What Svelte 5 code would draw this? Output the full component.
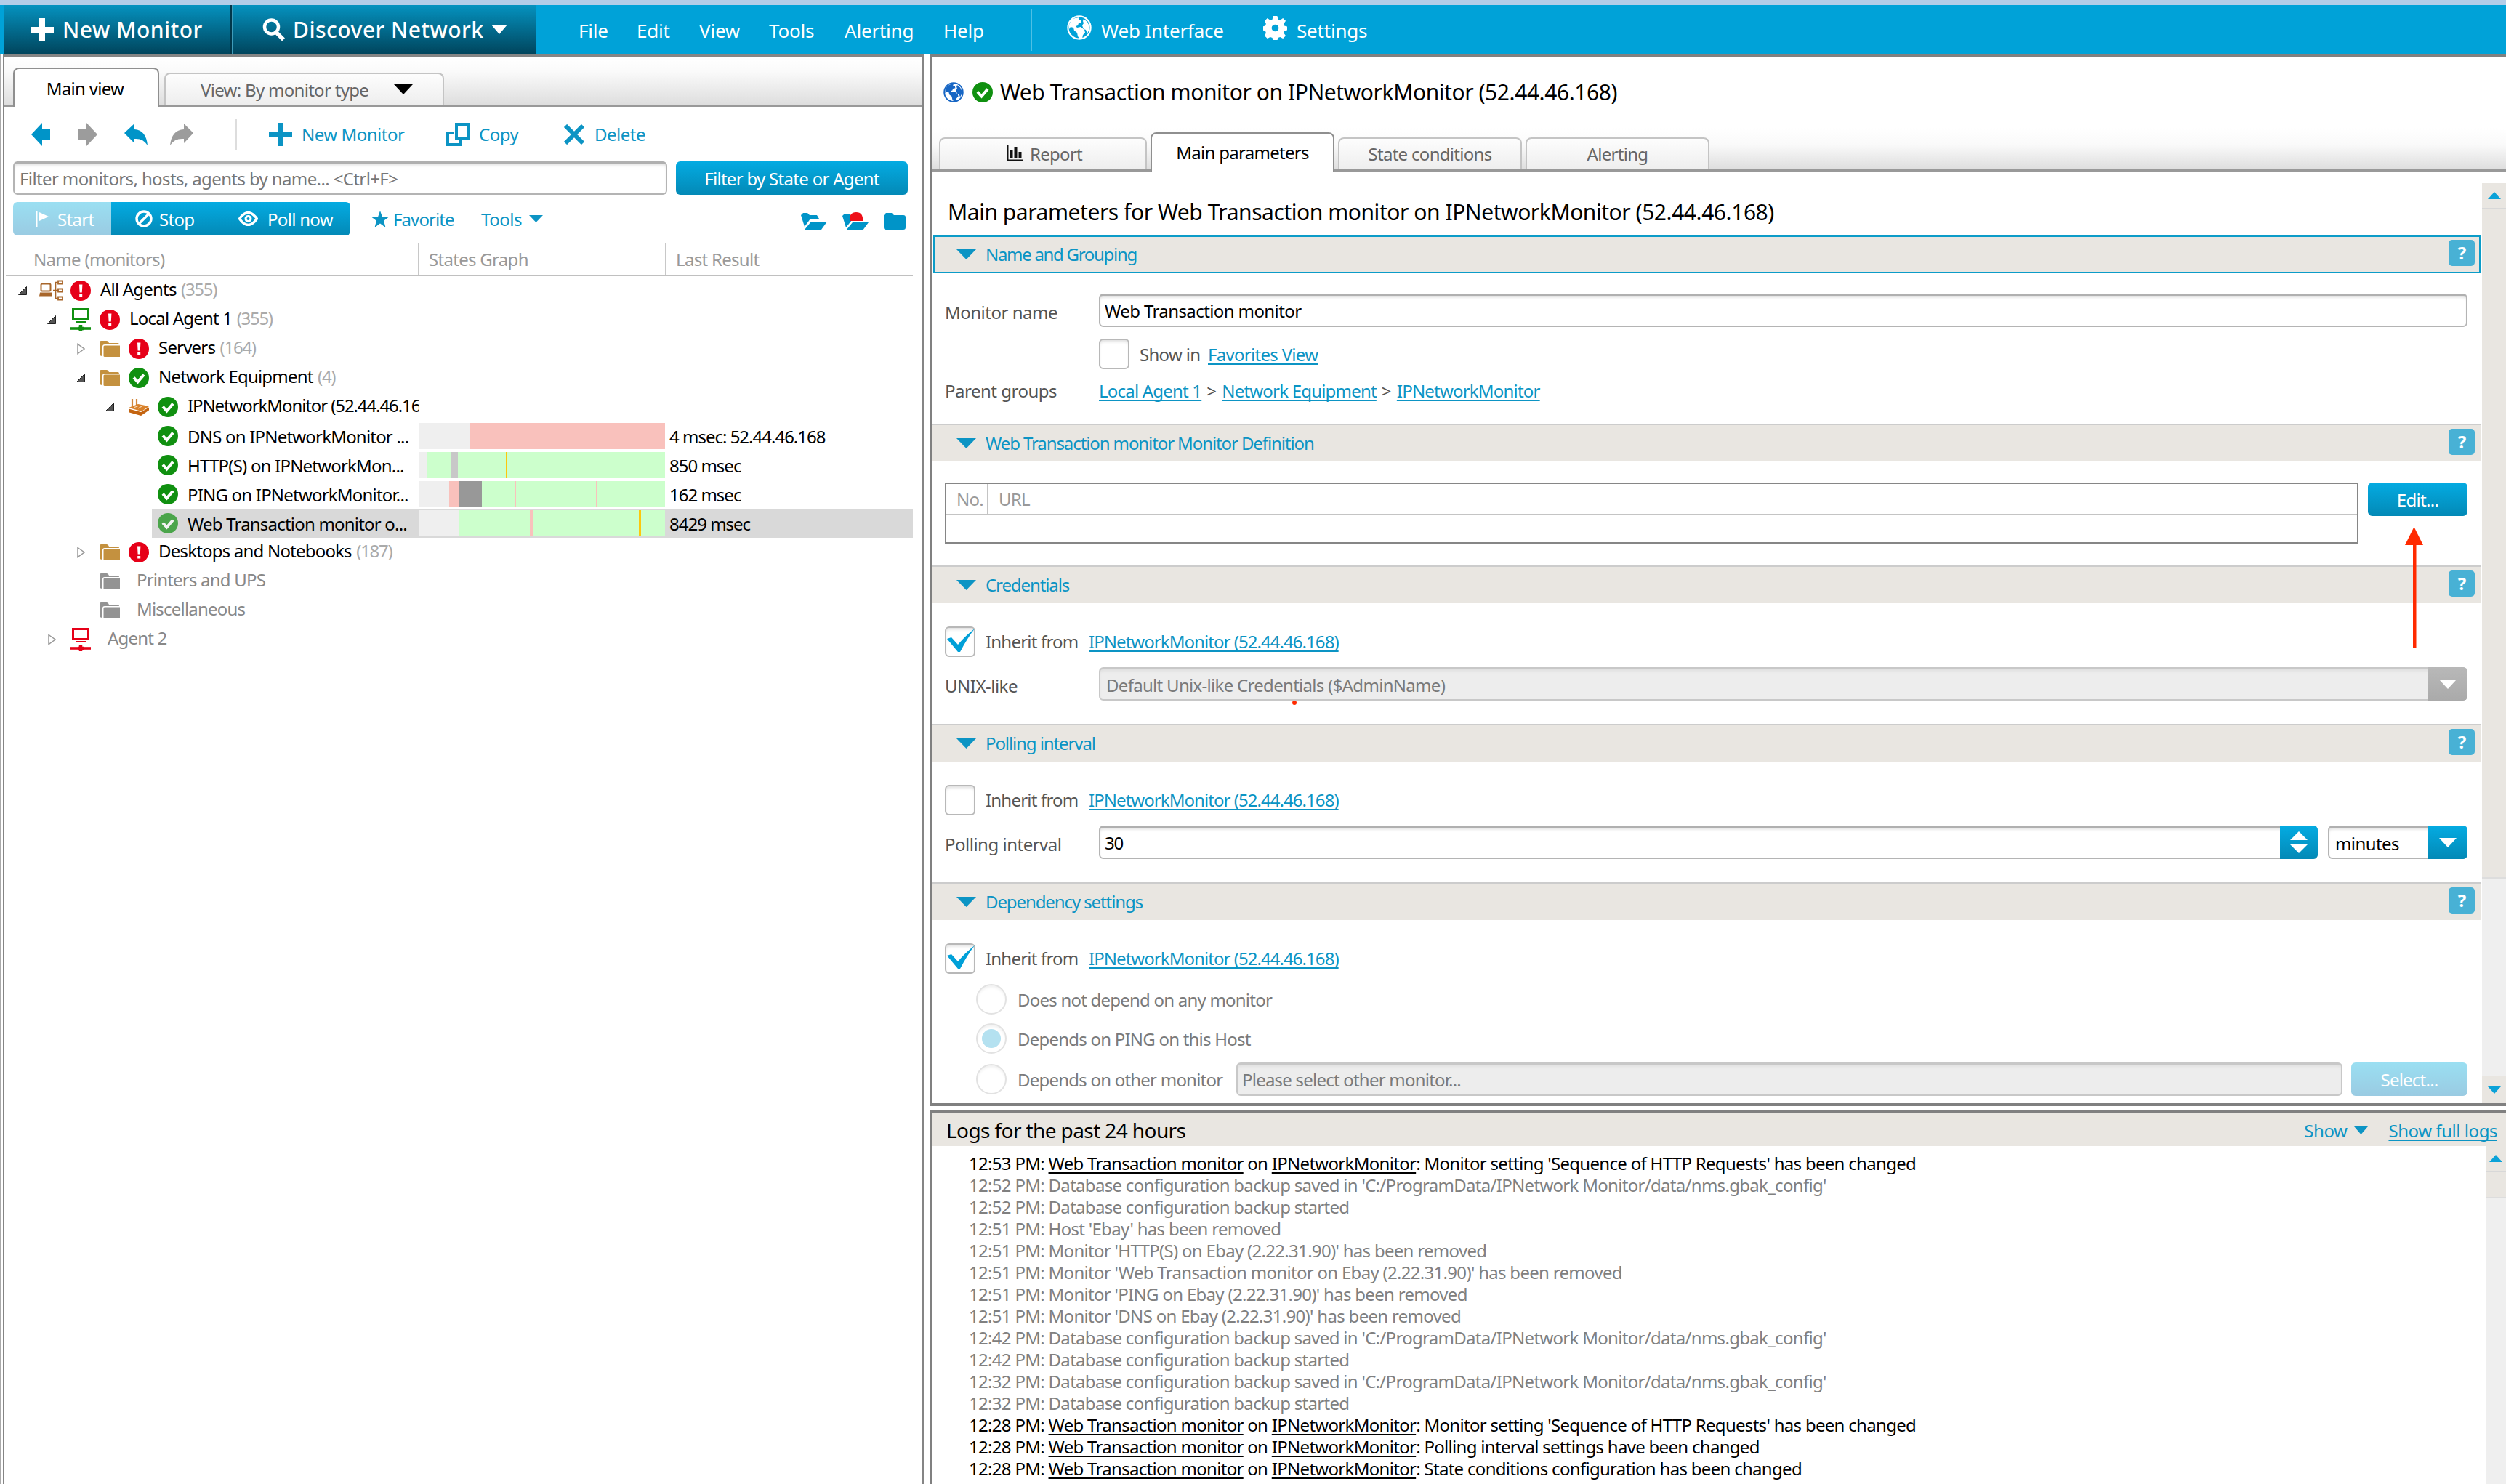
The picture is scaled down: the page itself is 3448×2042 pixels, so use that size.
<script>
	let filter = '';
	let monitorName = 'Web Transaction monitor';
	let interval = '30';

	const menu = [
		{ name: 'File', width: 80 },
		{ name: 'Edit', width: 86 },
		{ name: 'View', width: 96 },
		{ name: 'Tools', width: 104 },
		{ name: 'Alerting', width: 136 },
		{ name: 'Help', width: 120 }
	];

	// depth = indent level, arrow = open | closed, bars = [color, from, to] in px of the graph column
	const tree = [
		{ depth: 0, arrow: 'open', icon: 'agents', status: 'bad', name: 'All Agents', count: 355 },
		{ depth: 1, arrow: 'open', icon: 'agent', status: 'bad', name: 'Local Agent 1', count: 355 },
		{ depth: 2, arrow: 'closed', icon: 'folder', status: 'bad', name: 'Servers', count: 164 },
		{ depth: 2, arrow: 'open', icon: 'folder', status: 'ok', name: 'Network Equipment', count: 4 },
		{ depth: 3, arrow: 'open', icon: 'router', status: 'ok', name: 'IPNetworkMonitor (52.44.46.168)' },
		{
			depth: 3,
			status: 'ok',
			name: 'DNS on IPNetworkMonitor ...',
			result: '4 msec: 52.44.46.168',
			bars: [['pink', 69, 338]]
		},
		{
			depth: 3,
			status: 'ok',
			name: 'HTTP(S) on IPNetworkMon...',
			result: '850 msec',
			bars: [
				['green', 11, 338],
				['grey', 43, 53],
				['yellow', 119, 121]
			]
		},
		{
			depth: 3,
			status: 'ok',
			name: 'PING on IPNetworkMonitor...',
			result: '162 msec',
			bars: [
				['pink', 41, 55],
				['green', 55, 338],
				['dark', 55, 86],
				['pink', 131, 133],
				['pink', 243, 245]
			]
		},
		{
			depth: 3,
			status: 'ok',
			name: 'Web Transaction monitor o...',
			result: '8429 msec',
			selected: true,
			bars: [
				['green', 54, 338],
				['pink', 152, 157],
				['yellow', 302, 305]
			]
		},
		{ depth: 2, arrow: 'closed', icon: 'folder', status: 'bad', name: 'Desktops and Notebooks', count: 187 },
		{ depth: 2, icon: 'folder-off', name: 'Printers and UPS', off: true },
		{ depth: 2, icon: 'folder-off', name: 'Miscellaneous', off: true },
		{ depth: 1, arrow: 'closed', icon: 'agent-off', name: 'Agent 2', off: true }
	];

	const backup = "Database configuration backup saved in 'C:/ProgramData/IPNetwork Monitor/data/nms.gbak_config'";
	const started = 'Database configuration backup started';

	const logs = [
		{ time: '12:53 PM', monitor: true, text: "Monitor setting 'Sequence of HTTP Requests' has been changed" },
		{ time: '12:52 PM', text: backup },
		{ time: '12:52 PM', text: started },
		{ time: '12:51 PM', text: "Host 'Ebay' has been removed" },
		{ time: '12:51 PM', text: "Monitor 'HTTP(S) on Ebay (2.22.31.90)' has been removed" },
		{ time: '12:51 PM', text: "Monitor 'Web Transaction monitor on Ebay (2.22.31.90)' has been removed" },
		{ time: '12:51 PM', text: "Monitor 'PING on Ebay (2.22.31.90)' has been removed" },
		{ time: '12:51 PM', text: "Monitor 'DNS on Ebay (2.22.31.90)' has been removed" },
		{ time: '12:42 PM', text: backup },
		{ time: '12:42 PM', text: started },
		{ time: '12:32 PM', text: backup },
		{ time: '12:32 PM', text: started },
		{ time: '12:28 PM', monitor: true, text: "Monitor setting 'Sequence of HTTP Requests' has been changed" },
		{ time: '12:28 PM', monitor: true, text: 'Polling interval settings have been changed' },
		{ time: '12:28 PM', monitor: true, text: 'State conditions configuration has been changed' }
	];
</script>

{#snippet plus()}
	<svg class="i32" viewBox="0 0 32 32"><path d="M12 0h8v12h12v8H20v12h-8V20H0v-8h12z" fill="currentColor" /></svg>
{/snippet}

{#snippet globe()}
	<svg class="globe" viewBox="0 0 34 34">
		<circle cx="17" cy="17" r="15.6" fill="none" stroke="currentColor" stroke-width="2.2" />
		<path
			d="M3 13l3-6 5-3 6-1-1 3 3 0 1 4-4 1-1 3-3 1 2 2 5-1 5 4 1 4-3 3-1 5-3 1-3-4-1-5-4-3-1-4-4-1-2 3z"
			fill="currentColor"
		/>
		<path d="M23 5l5 4 3 6 0 4-3 6-2-5-3-1-2-5 2-3-1-3z" fill="currentColor" />
	</svg>
{/snippet}

{#snippet badge(status)}
	<svg class="badge" viewBox="0 0 28 28">
		{#if status === 'ok'}
			<circle cx="14" cy="14" r="14" fill="#109010" />
			<path d="M7 13.5l5.5 6L21 9.5" fill="none" stroke="#fff" stroke-width="4" />
		{:else}
			<circle cx="14" cy="14" r="14" fill="#e60018" />
			<path d="M12 5.5h4.4l-.6 11h-3.2zM12.2 19h4v3.6h-4z" fill="#fff" />
		{/if}
	</svg>
{/snippet}

{#snippet down(w, h)}
	<svg width={w} height={h} viewBox="0 0 20 10" preserveAspectRatio="none"><path d="M0 0h20L10 10z" fill="currentColor" /></svg>
{/snippet}

{#snippet up(w, h)}
	<svg width={w} height={h} viewBox="0 0 20 10" preserveAspectRatio="none"><path d="M0 10h20L10 0z" fill="currentColor" /></svg>
{/snippet}

{#snippet treeIcon(name)}
	{#if name === 'agents'}
		<svg width="34" height="30" viewBox="0 0 34 30" fill="none" stroke="#a8662a" stroke-width="2">
			<rect x="2.5" y="5.5" width="13" height="10" rx="1.5" />
			<path d="M1 17.5h16l1 5H0z" fill="#a8662a" stroke="none" />
			<path d="M19 14.5h7M22.5 14.5V3.5h3M22.5 14.5v11h3" stroke-width="1.6" />
			<path d="M26 1.5h6v4h-6zM26 12.5h6v4h-6zM26 23.5h6v4h-6z" stroke-width="1.8" />
		</svg>
	{:else if name === 'agent' || name === 'agent-off'}
		<svg class:off={name === 'agent-off'} class="agent" width="28" height="32" viewBox="0 0 28 32" fill="none" stroke="currentColor">
			<rect x="3.5" y="1.5" width="21" height="14" stroke-width="3" />
			<path d="M7 19h14" stroke-width="2" />
			<path d="M0 28h28" stroke-width="3.6" />
			<path d="M14 23v9M10 28h8" stroke-width="4.5" />
		</svg>
	{:else if name === 'router'}
		<svg width="28" height="24" viewBox="0 0 28 24">
			<path d="M5 1v12M11 1v11" stroke="#d2873c" stroke-width="2.2" />
			<path d="M0 13l13-5 15 3-10 7z" fill="#d9822b" />
			<path d="M0 14.5L17 19l11-6.5v4L17 24 1 19.5z" fill="#c46410" />
			<path d="M8 12.5l5-2M13 14l5-3" stroke="#f6d9b8" stroke-width="1.2" />
		</svg>
	{:else}
		<svg class:off={name === 'folder-off'} class="folder" width="28" height="22" viewBox="0 0 28 22">
			<path d="M0 2q0-2 2-2h8q2 0 3 3h12q2 0 2 2H7Q4 5 4 8v13Q0 21 0 18z" fill="currentColor" />
			<path d="M5.5 8q0-1.500 1.500-1.500h21V22H7q-1.500 0-1.500-1.500z" fill="currentColor" />
		</svg>
	{/if}
{/snippet}

{#snippet section(title, focused = false)}
	<div class="section-bar" class:focused>
		<span class="section-arrow">{@render down(27, 14)}</span>
		<span class="section-title">{title}</span>
		<button class="help">?</button>
	</div>
{/snippet}

{#snippet inherit(checked)}
	<div class="inherit">
		<span class="check">
			{#if checked}
				<svg viewBox="0 0 42 42"><path d="M3 17l6-2 9 10Q28 13 41 3q-10 13-20 32h-3z" fill="#00a0d8" /></svg>
			{/if}
		</span>
		<span class="inherit-label">Inherit from</span>
		<a class="host" href="#host">IPNetworkMonitor (52.44.46.168)</a>
	</div>
{/snippet}

<div class="window">
	<header>
		<button class="big new">
			{@render plus()}
			<span>New Monitor</span>
		</button>
		<button class="big discover">
			<svg class="i32" viewBox="0 0 32 32" fill="none" stroke="currentColor">
				<circle cx="12.5" cy="12" r="9.5" stroke-width="4.5" />
				<path d="M19 19.5l10 10" stroke-width="5.5" />
			</svg>
			<span>Discover Network</span>
			{@render down(22, 13)}
		</button>
		<nav>
			{#each menu as item}
				<span style="width: {item.width}px">{item.name}</span>
			{/each}
		</nav>
		<span class="header-line"></span>
		<span class="header-link web">{@render globe()}Web Interface</span>
		<span class="header-link settings">
			<svg width="33" height="33" viewBox="0 0 34 34">
				<path
					d="M14 0h6l1 5 3 1 4-3 4 4-3 4 1 3 4 1v5l-4 1-1 3 3 4-4 4-4-2-3 1-1 4h-6l-1-4-3-1-4 2-4-4 2-4-1-3-4-1v-5l4-1 1-3-2-4 4-4 4 3 3-1zM17 12a5 5 0 1 0 0 10a5 5 0 1 0 0-10z"
					fill="currentColor"
					fill-rule="evenodd"
				/>
			</svg>
			Settings
		</span>
	</header>

	<div class="body">
		<!-- monitor tree -->
		<aside>
			<div class="tabs left-tabs">
				<div class="tab active main-view">Main view</div>
				<div class="tab by-type">View: By monitor type <i>{@render down(26, 14)}</i></div>
			</div>

			<div class="toolbar">
				<svg width="26" height="32" viewBox="0 0 26 32"><path d="M0 16L15 0v9h11v14H15v9z" fill="#0094c8" /></svg>
				<svg width="26" height="32" viewBox="0 0 26 32"><path d="M26 16L11 0v9H0v14h11v9z" fill="#9c9c9c" /></svg>
				<svg class="turn" width="32" height="30" viewBox="0 0 32 30">
					<path d="M0 13L14 0v8q16 1 18 22-6-10-18-9v6z" fill="#0094c8" />
				</svg>
				<svg class="turn" width="32" height="30" viewBox="0 0 32 30">
					<path d="M32 13L19 0v8Q2 9 0 30q6-10 19-9v6z" fill="#9c9c9c" />
				</svg>
				<span class="toolbar-line"></span>
				<span class="tool new-tool">{@render plus()}New Monitor</span>
				<span class="tool copy">
					<svg class="i32" viewBox="0 0 32 32" fill="none" stroke="currentColor" stroke-width="4">
						<path d="M14 2h16v19H14z" />
						<path d="M10 14H2v16h17v-6" />
					</svg>
					Copy
				</span>
				<span class="tool delete">
					<svg width="30" height="28" viewBox="0 0 30 28"><path d="M3 2l24 24M27 2L3 26" stroke="currentColor" stroke-width="6" /></svg>
					Delete
				</span>
			</div>

			<div class="filter-row">
				<input class="field" bind:value={filter} placeholder="Filter monitors, hosts, agents by name... <Ctrl+F>" />
				<button class="blue filter-btn">Filter by State or Agent</button>
			</div>

			<div class="actions">
				<div class="group">
					<button class="blue disabled start">
						<svg width="18" height="22" viewBox="0 0 18 22"><path d="M0 0h2.5v22H0zM5 2l13 6-13 6z" fill="#fff" /></svg>
						Start
					</button>
					<button class="blue stop">
						<svg width="24" height="24" viewBox="0 0 24 24" fill="none" stroke="#fff" stroke-width="3.4">
							<circle cx="12" cy="12" r="10" />
							<path d="M5 19L19 5" />
						</svg>
						Stop
					</button>
					<button class="blue poll">
						<svg width="27" height="20" viewBox="0 0 27 20" fill="none" stroke="#fff">
							<path d="M1.5 10Q13.5-7 25.5 10 13.5 27 1.5 10z" stroke-width="3.4" />
							<circle cx="13.5" cy="10" r="3.5" stroke-width="3" />
						</svg>
						Poll now
					</button>
				</div>
				<span class="favorite">
					<svg width="24" height="23" viewBox="0 0 24 23"><path d="M12 0l3 8.5h9l-7 5.3L19.5 23 12 17.5 4.5 23 7 13.8 0 8.5h9z" fill="currentColor" /></svg>
					Favorite
				</span>
				<span class="tools">Tools {@render down(19, 10)}</span>
				<div class="folders">
					<svg width="36" height="23" viewBox="0 0 36 23" fill="#0094c8">
						<path d="M0 3l3-3h6l3 3h10l3 5H13L5 19z" />
						<path d="M14 12h22l-8 11H5z" />
					</svg>
					<svg width="36" height="25" viewBox="0 0 36 25" fill="#0094c8">
						<path d="M0 5l3-3h8l-1 9h3L5 21z" />
						<path d="M10 12q-1-12 9-12t9 12z" fill="#ee0f18" />
						<path d="M14 14h22l-8 11H5z" />
					</svg>
					<svg width="30" height="23" viewBox="0 0 30 23" fill="#0094c8">
						<path d="M0 3l3-3h8l3 3h13q3 0 3 3v14q0 3-3 3H3q-3 0-3-3z" />
					</svg>
				</div>
			</div>

			<div class="columns">
				<span>Name (monitors)</span>
				<span>States Graph</span>
				<span>Last Result</span>
			</div>

			<div class="tree">
				{#each tree as row}
					<div class="row" class:off={row.off} class:selected={row.selected} style="padding-left: {row.depth * 40}px">
						<div class="row-name">
							<span class="slot">
								{#if row.arrow === 'open'}
									<svg width="12" height="12" viewBox="0 0 12 12"><path d="M11.5.5v11H.5z" fill="#555" stroke="#222" /></svg>
								{:else if row.arrow}
									<svg width="11" height="16" viewBox="0 0 11 16"><path d="M1 1.5L10 8l-9 6.5z" fill="#fff" stroke="#999" stroke-width="1.5" /></svg>
								{/if}
							</span>
							<span class="slot">
								{#if row.icon}{@render treeIcon(row.icon)}{/if}
							</span>
							<span class="slot" class:narrow={!row.status}>
								{#if row.status}{@render badge(row.status)}{/if}
							</span>
							<span class="label" class:low={row.bars} class:device={row.icon === 'router'}>
								{row.name}
								{#if row.count}<em>({row.count})</em>{/if}
							</span>
						</div>
						{#if row.bars}
							<div class="graph">
								{#each row.bars as [color, from, to]}
									<i class={color} style="left: {from}px; width: {to - from}px"></i>
								{/each}
							</div>
							<span class="result">{row.result}</span>
						{/if}
					</div>
				{/each}
			</div>
		</aside>

		<main>
			<div class="details">
				<div class="title">
					<span class="blue-globe">{@render globe()}</span>
					{@render badge('ok')}
					<h1>Web Transaction monitor on IPNetworkMonitor (52.44.46.168)</h1>
				</div>
				<div class="tabs right-tabs">
					<div class="tab report">
						<svg width="22" height="22" viewBox="0 0 22 22"><path d="M0 0h2.5v19.5H22V22H0zM4.5 7h4v10.5h-4zM10.5 2h4v15.5h-4zM16.5 9h4v8.5h-4z" fill="#111" /></svg>
						Report
					</div>
					<div class="tab active">Main parameters</div>
					<div class="tab">State conditions</div>
					<div class="tab">Alerting</div>
				</div>

				<div class="params">
					<div class="form">
						<h2>Main parameters for Web Transaction monitor on IPNetworkMonitor (52.44.46.168)</h2>

						{@render section('Name and Grouping', true)}
						<div class="section-body naming">
							<div class="line">
								<label for="name">Monitor name</label>
								<input id="name" class="field" bind:value={monitorName} />
							</div>
							<div class="line fav-line">
								<span class="check"></span>
								<span class="show-in">Show in</span>
								<a href="#favorites">Favorites View</a>
							</div>
							<div class="line groups">
								<span class="lbl">Parent groups</span>
								<a href="#agent">Local Agent 1</a><b>&gt;</b><a href="#equipment">Network Equipment</a><b>&gt;</b><a href="#host">IPNetworkMonitor</a>
							</div>
						</div>

						{@render section('Web Transaction monitor Monitor Definition')}
						<div class="section-body definition">
							<div class="urls">
								<div class="urls-head"><span>No.</span><span>URL</span></div>
							</div>
							<div class="edit-wrap">
								<button class="blue edit">Edit...</button>
								<svg class="pointer" width="26" height="166" viewBox="0 0 26 166">
									<path d="M12.5 0L25 25H15.5V166H11V25H0z" fill="#ff2a00" />
								</svg>
							</div>
						</div>

						{@render section('Credentials')}
						<div class="section-body">
							{@render inherit(true)}
							<div class="line next">
								<span class="lbl">UNIX-like</span>
								<div class="field grey-field combo">
									Default Unix-like Credentials ($AdminName)
									<span class="dot"></span>
									<span class="drop grey-drop">{@render down(24, 13)}</span>
								</div>
							</div>
						</div>

						{@render section('Polling interval')}
						<div class="section-body">
							{@render inherit(false)}
							<div class="line next">
								<label for="interval">Polling interval</label>
								<div class="spin">
									<input id="interval" class="field" bind:value={interval} />
									<span class="spin-btn">{@render up(24, 12)}{@render down(24, 12)}</span>
								</div>
								<div class="field combo unit">
									minutes
									<span class="drop">{@render down(24, 13)}</span>
								</div>
							</div>
						</div>

						{@render section('Dependency settings')}
						<div class="section-body dependency">
							{@render inherit(true)}
							<div class="radio-line first"><span class="radio"></span>Does not depend on any monitor</div>
							<div class="radio-line"><span class="radio on"></span>Depends on PING on this Host</div>
							<div class="radio-line last">
								<span class="radio"></span>
								<span class="other">Depends on other monitor</span>
								<div class="field grey-field">Please select other monitor...</div>
								<button class="blue disabled select">Select...</button>
							</div>
						</div>
					</div>

					<div class="scroll">
						<div class="scroll-btn">{@render up(18, 10)}</div>
						<div class="thumb"></div>
						<div class="track"></div>
						<div class="scroll-btn bottom">{@render down(18, 10)}</div>
					</div>
				</div>
			</div>

			<div class="logs">
				<div class="logs-bar">
					<h2>Logs for the past 24 hours</h2>
					<span class="show">Show {@render down(19, 11)}</span>
					<a href="#logs">Show full logs</a>
				</div>
				<div class="logs-body">
					<div class="log-list">
						{#each logs as log}
							<p class:monitor={log.monitor}>
								{log.time}:
								{#if log.monitor}<u>Web Transaction monitor</u> on <u>IPNetworkMonitor</u>:{/if}
								{log.text}
							</p>
						{/each}
					</div>
					<div class="scroll log-scroll">
						<div class="scroll-btn">{@render up(18, 10)}</div>
						<div class="thumb"></div>
						<div class="track"></div>
					</div>
				</div>
			</div>
		</main>
	</div>
</div>

<style>
	:global(body) {
		margin: 0;
		background: #fff;
	}

	.window,
	.window * {
		box-sizing: border-box;
	}

	.window {
		width: 3448px;
		height: 2042px;
		overflow: hidden;
		display: flex;
		flex-direction: column;
		border-top: 7px solid #b3cde8;
		font-family: 'Noto Sans', 'Open Sans', sans-serif;
		font-size: 24px;
		letter-spacing: -0.7px;
		color: #000;
		white-space: nowrap;
	}

	svg {
		display: block;
		flex: none;
	}

	button,
	input {
		font: inherit;
		letter-spacing: inherit;
		border: none;
		padding: 0;
	}

	h1,
	h2,
	p {
		margin: 0;
		font-weight: normal;
	}

	a {
		color: #0c94c4;
	}

	a,
	u {
		text-decoration-thickness: 2px;
		text-underline-offset: 3px;
		text-decoration-skip-ink: none;
	}

	.i32 {
		width: 32px;
		height: 32px;
	}

	.globe {
		width: 34px;
		height: 34px;
	}

	.badge {
		width: 28px;
		height: 28px;
	}

	/* header */
	header {
		height: 67px;
		flex: none;
		display: flex;
		align-items: center;
		padding-left: 5px;
		background: #00a2d8;
		color: #fff;
		font-size: 26px;
		letter-spacing: -0.2px;
	}

	.big {
		height: 67px;
		display: flex;
		align-items: center;
		color: #fff;
		font-size: 30px;
		font-weight: 500;
		letter-spacing: 0.5px;
		background: linear-gradient(#0592bf, #00455d);
	}

	.new {
		width: 314px;
		padding-left: 37px;
		gap: 12px;
		border-right: 2px solid #01374a;
	}

	.discover {
		width: 418px;
		padding-left: 40px;
		border-left: 2px solid #3f9cba;
		gap: 10px;
	}

	nav {
		display: flex;
		padding: 2px 0 0 59px;
	}

	.header-line {
		width: 2px;
		height: 58px;
		background: #4fc0e4;
	}

	.header-link {
		display: flex;
		align-items: center;
		padding-top: 2px;
	}

	.header-link :global(svg) {
		margin-bottom: 7px;
	}

	.web {
		gap: 13px;
		margin-left: 48px;
		width: 270px;
	}

	.settings {
		gap: 13px;
	}

	.body {
		flex: 1;
		min-height: 0;
		display: flex;
		gap: 8px;
		padding-left: 3px;
		border-left: 1px solid #aaa;
	}

	/* left panel */
	aside {
		width: 1267px;
		flex: none;
		border: solid #858585;
		border-width: 5px 3px 0 2px;
	}

	.tabs {
		display: flex;
		align-items: flex-end;
		border-bottom: 3px solid #999;
	}

	.tab {
		display: flex;
		align-items: center;
		justify-content: center;
		height: 44px;
		border: 2px solid #c4c4c4;
		border-bottom: none;
		border-radius: 8px 8px 0 0;
		background: linear-gradient(#fdfdfd, #eee);
		color: #666;
	}

	.tab.active {
		height: 54px;
		margin-bottom: -3px;
		border-color: #8f8f8f;
		background: #fff;
		color: #000;
	}

	.left-tabs {
		height: 68px;
		padding-left: 12px;
		gap: 7px;
		background: linear-gradient(#fff, #fafafa 30%, #dedede);
	}

	.main-view {
		width: 201px;
		padding-right: 3px;
	}

	.by-type {
		width: 385px;
		justify-content: flex-start;
		padding-left: 48px;
	}

	.by-type i {
		margin-left: 35px;
		color: #000;
	}

	.toolbar {
		height: 75px;
		display: flex;
		align-items: center;
		padding-left: 37px;
		letter-spacing: -0.5px;
		color: #0c94c4;
	}

	.toolbar svg + svg {
		margin-left: 39px;
	}

	.toolbar svg + .turn {
		margin-left: 37px;
	}

	.toolbar .turn + .turn {
		margin-left: 31px;
	}

	.toolbar-line {
		width: 2px;
		height: 42px;
		margin-left: 58px;
		background: #ddd;
	}

	.tool {
		display: flex;
		align-items: center;
		gap: 13px;
	}

	.new-tool {
		width: 244px;
		margin-left: 44px;
	}

	.copy {
		width: 161px;
	}

	.filter-row {
		display: flex;
		gap: 12px;
		padding-left: 12px;
	}

	.field {
		height: 46px;
		padding: 0 8px;
		border: 2px solid #b4b4b4;
		border-top: 3px solid #b0b0b0;
		border-radius: 6px;
		background: #fff;
		box-shadow: inset 0 4px 4px -2px #ddd;
		color: #000;
		display: flex;
		align-items: center;
	}

	.filter-row .field {
		width: 900px;
		padding-left: 7px;
		letter-spacing: -0.62px;
	}

	.field::placeholder {
		color: #777;
		opacity: 1;
	}

	.blue {
		height: 46px;
		border-radius: 6px;
		background: linear-gradient(#04abe2, #0389b6);
		color: #fff;
		display: flex;
		align-items: center;
		justify-content: center;
	}

	.blue.disabled {
		background: linear-gradient(#9adff2, #9acbe2);
	}

	.filter-btn {
		width: 319px;
	}

	.actions {
		display: flex;
		align-items: center;
		height: 46px;
		margin-top: 10px;
		padding-left: 12px;
		color: #0c94c4;
	}

	.group {
		display: flex;
		border-radius: 6px;
		overflow: hidden;
	}

	.group .blue {
		border-radius: 0;
		justify-content: flex-start;
	}

	.start {
		width: 135px;
		padding-left: 31px;
		gap: 12px;
	}

	.stop {
		width: 148px;
		padding-left: 33px;
		gap: 9px;
	}

	.poll {
		width: 181px;
		padding-left: 26px;
		gap: 13px;
		border-left: 1px solid #59c0e0;
	}

	.favorite {
		display: flex;
		align-items: center;
		gap: 6px;
		width: 151px;
		margin-left: 29px;
		letter-spacing: -0.9px;
	}

	.tools {
		display: flex;
		align-items: center;
		gap: 10px;
		letter-spacing: -0.5px;
	}

	.folders {
		display: flex;
		align-items: center;
		gap: 21px;
		margin: 6px 22px 0 auto;
	}

	.columns {
		display: grid;
		grid-template-columns: 567px 340px 341px;
		height: 46px;
		margin: 10px 0 0 2px;
		border-bottom: 2px solid #c0c0c0;
		width: 1248px;
		color: #999;
	}

	.columns span {
		display: flex;
		align-items: center;
		padding: 1px 0 0 13px;
		border-left: 2px solid #c8c8c8;
	}

	.columns span:first-child {
		border: none;
		padding-left: 38px;
	}

	/* tree */
	.row {
		display: grid;
		grid-template-columns: minmax(0, 1fr) 338px 341px;
		height: 40px;
		width: 1250px;
	}

	.row.selected {
		background: linear-gradient(90deg, #fff 203px, #d9d9d9 203px);
	}

	.row.selected .badge {
		opacity: 0.7;
	}

	.row-name {
		display: flex;
		align-items: center;
		overflow: hidden;
		padding-left: 5px;
	}

	.slot {
		flex: none;
		width: 40px;
		display: flex;
		justify-content: center;
	}

	.slot.narrow {
		width: 10px;
	}

	.label {
		padding-left: 7px;
		padding-bottom: 6px;
		letter-spacing: -0.8px;
	}

	.label.low {
		padding-bottom: 0;
		padding-top: 1px;
	}

	.label.device {
		letter-spacing: -1.1px;
	}

	.label em {
		font-style: normal;
		letter-spacing: -1.3px;
		color: #aaa;
		margin-left: 1px;
	}

	.row.off {
		color: #888;
	}

	.agent {
		color: #109010;
	}

	.agent.off {
		color: #e60018;
	}

	.folder {
		color: #c4913f;
	}

	.folder.off {
		color: #939393;
	}

	.graph {
		position: relative;
		height: 36px;
		margin-top: 2px;
		background: #efefef;
	}

	.graph i {
		position: absolute;
		top: 0;
		bottom: 0;
	}

	.pink {
		background: #f9c1bc;
	}

	.green {
		background: #ccffcc;
	}

	.grey {
		background: #c8c8c8;
	}

	.dark {
		background: #989898;
	}

	.yellow {
		background: #fdc70c;
	}

	.result {
		padding: 4px 0 0 6px;
		line-height: 33px;
		letter-spacing: -1px;
	}

	/* right panel */
	main {
		flex: 1;
		min-width: 0;
		display: flex;
		flex-direction: column;
		gap: 6px;
	}

	.details {
		height: 1448px;
		flex: none;
		border: solid #808080;
		border-width: 5px 0 4px 4px;
	}

	.title {
		height: 97px;
		display: flex;
		align-items: center;
		padding: 0 0 2px 15px;
	}

	.blue-globe {
		margin-right: 12px;
		color: #1766c4;
	}

	.blue-globe :global(.globe) {
		width: 28px;
		height: 28px;
	}

	h1 {
		margin-left: 10px;
		font-size: 30px;
		letter-spacing: -0.43px;
	}

	.right-tabs {
		height: 60px;
		padding-left: 9px;
		gap: 5px;
		background: linear-gradient(#fff, #fafafa 40%, #dedede);
	}

	.right-tabs .tab {
		width: 253px;
		padding-bottom: 2px;
	}

	.right-tabs .report {
		width: 286px;
		padding-left: 4px;
		gap: 10px;
	}

	.params {
		display: flex;
		height: 1282px;
		overflow: hidden;
	}

	.form {
		width: 2130px;
		flex: none;
	}

	.form h2 {
		height: 88px;
		line-height: 38px;
		padding: 37px 0 0 21px;
		font-size: 30px;
		letter-spacing: -0.45px;
	}

	.section-bar {
		display: flex;
		align-items: center;
		height: 52px;
		padding: 0 8px 0 33px;
		background: #e9e6e1;
		border-top: 2px solid #ccc;
	}

	.section-bar.focused {
		margin-left: 1px;
		padding: 0 6px 0 30px;
		border: 2px solid #0c9cc8;
	}

	.section-arrow,
	.section-title {
		color: #0c94c4;
	}

	.section-title {
		margin: 0 0 2px 13px;
		letter-spacing: -1.1px;
	}

	.section-bar.focused .section-title {
		letter-spacing: -1.3px;
	}

	.help {
		width: 36px;
		height: 36px;
		margin-left: auto;
		margin-bottom: 4px;
		border-radius: 5px;
		background: #48b1d5;
		color: #fff;
		font-weight: bold;
		line-height: 36px;
	}

	.section-body {
		height: 166px;
		padding: 32px 18px 0 17px;
		color: #555;
	}

	.naming {
		height: 207px;
		padding-top: 28px;
	}

	.line {
		display: flex;
		align-items: center;
	}

	.line label,
	.lbl {
		width: 212px;
		flex: none;
		padding-top: 4px;
		letter-spacing: -0.5px;
	}

	.naming .field {
		flex: 1;
		padding-left: 6px;
		letter-spacing: -0.6px;
	}

	.fav-line {
		margin: 16px 0 0 212px;
	}

	.check {
		flex: none;
		width: 42px;
		height: 42px;
		border: 2px solid #b8b8b8;
		border-radius: 6px;
		box-shadow: inset 0 4px 4px -2px #ddd;
	}

	.check svg {
		width: 42px;
		height: 42px;
		margin: -2px;
	}

	.show-in {
		width: 94px;
		margin-left: 14px;
	}

	.groups {
		height: 40px;
		margin-top: 9px;
	}

	.groups .lbl {
		padding: 0;
	}

	.groups a {
		letter-spacing: -0.8px;
	}

	.groups b {
		font-weight: normal;
		margin: 0 8px 0 7px;
	}

	.definition {
		display: flex;
		gap: 13px;
		height: 143px;
		padding-top: 29px;
	}

	.urls {
		flex: 1;
		height: 84px;
		border: 2px solid #868686;
	}

	.urls-head {
		display: flex;
		height: 43px;
		border-bottom: 2px solid #c4c4c4;
		color: #999;
	}

	.urls-head span {
		display: flex;
		align-items: center;
		padding-left: 14px;
	}

	.urls-head span:first-child {
		width: 58px;
		border-right: 2px solid #c4c4c4;
	}

	.edit-wrap {
		position: relative;
	}

	.edit {
		width: 137px;
	}

	.pointer {
		position: absolute;
		left: 51px;
		top: 61px;
	}

	.inherit {
		display: flex;
		align-items: center;
		height: 42px;
	}

	.inherit-label {
		width: 142px;
		margin-left: 14px;
		padding-bottom: 1px;
		letter-spacing: -0.8px;
	}

	.host {
		letter-spacing: -0.95px;
		padding-bottom: 1px;
	}

	.next {
		margin-top: 14px;
	}

	.grey-field {
		background: #ededed;
		border-color: #c8c8c8;
		color: #7a7a7a;
	}

	.combo {
		position: relative;
		flex: 1;
		padding-top: 2px;
	}

	.drop,
	.spin-btn {
		position: absolute;
		right: -2px;
		top: -3px;
		width: 54px;
		height: 46px;
		display: flex;
		flex-direction: column;
		align-items: center;
		justify-content: center;
		gap: 6px;
		border-radius: 0 6px 6px 0;
		background: linear-gradient(#04abe2, #0389b6);
		color: #fff;
	}

	.drop.grey-drop {
		background: linear-gradient(#b8b8b8, #aaa);
	}

	.dot {
		position: absolute;
		left: 264px;
		top: 43px;
		width: 6px;
		height: 6px;
		border-radius: 50%;
		background: #ff2a00;
	}

	.spin {
		position: relative;
		flex: 1;
	}

	.spin .field {
		width: 100%;
		padding-left: 6px;
		letter-spacing: -1.2px;
	}

	.spin-btn {
		right: 0;
		top: 0;
		width: 52px;
	}

	.unit {
		flex: none;
		width: 192px;
		margin-left: 14px;
		letter-spacing: -0.6px;
	}

	.dependency {
		height: 250px;
	}

	.radio-line {
		display: flex;
		align-items: center;
		height: 42px;
		margin-top: 12px;
		padding-left: 43px;
		letter-spacing: -0.78px;
		color: #7a7a7a;
	}

	.radio-line.first {
		margin-top: 14px;
	}

	.radio-line.last {
		height: 46px;
	}

	.radio {
		flex: none;
		width: 42px;
		height: 42px;
		margin-right: 15px;
		border: 2px solid #e2e2e2;
		border-radius: 50%;
		box-shadow: inset 0 4px 4px -2px #eee;
	}

	.radio.on {
		background: radial-gradient(#b4e1f0 12.5px, #fff 13.5px);
	}

	.other {
		width: 301px;
	}

	.radio-line .field {
		flex: 1;
		padding-left: 6px;
		padding-bottom: 1px;
	}

	.select {
		width: 160px;
		margin-left: 12px;
	}

	.scroll {
		flex: none;
		width: 33px;
		margin: 16px 0 0 2px;
		display: flex;
		flex-direction: column;
		background: #efefef;
		color: #0ba2d8;
	}

	.scroll-btn {
		height: 36px;
		display: flex;
		align-items: center;
		justify-content: center;
		background: #e9e6e1;
		border-bottom: 2px solid #d8d8d8;
	}

	.scroll-btn.bottom {
		height: 38px;
		padding-top: 1px;
		border: none;
	}

	.thumb {
		height: 921px;
		background: #e9e6e1;
		border-bottom: 2px solid #ddd;
	}

	.track {
		flex: 1;
	}

	/* logs */
	.logs {
		flex: 1;
		min-height: 0;
		display: flex;
		flex-direction: column;
		border: solid #808080;
		border-width: 4px 0 0 4px;
	}

	.logs-bar {
		display: flex;
		align-items: center;
		height: 45px;
		flex: none;
		padding: 1px 12px 0 19px;
		background: #e9e6e1;
		letter-spacing: -0.45px;
		color: #0c94c4;
	}

	.logs-bar h2 {
		flex: 1;
		font-size: 28px;
		letter-spacing: -0.6px;
		color: #000;
	}

	.show {
		display: flex;
		align-items: center;
		gap: 10px;
		margin-right: 28px;
	}

	.logs-body {
		flex: 1;
		min-height: 0;
		display: flex;
	}

	.log-list {
		flex: 1;
		padding: 9px 0 0 50px;
		letter-spacing: -0.7px;
	}

	.log-list p {
		height: 30px;
		line-height: 30px;
		color: #808080;
	}

	.log-list p.monitor {
		color: #000;
	}

	.log-scroll {
		width: 28px;
		margin: 0;
	}

	.log-scroll .thumb {
		height: 36px;
	}
</style>
